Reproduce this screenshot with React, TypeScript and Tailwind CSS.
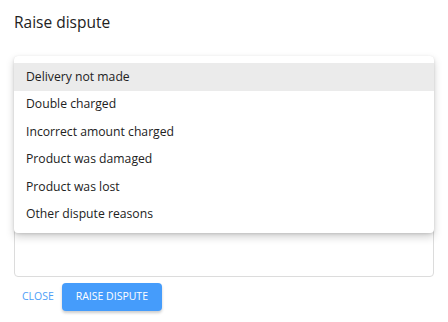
const reasons = [
  "Delivery not made",
  "Double charged",
  "Incorrect amount charged",
  "Product was damaged",
  "Product was lost",
  "Other dispute reasons",
];

export default function App() {
  return (
    <div className="w-[448px] h-[322px] bg-white px-[14px] font-['Open_Sans',sans-serif] text-[#222]">
      <h2 className="pt-[12px] text-[15.5px] leading-[20px]">Raise dispute</h2>

      {/* Text box with open reason menu over it */}
      <div className="relative mt-[24px] h-[221px] rounded-[4px] border border-[#dcdcdc]">
        <div className="absolute -left-px -right-px -top-px rounded-[4px] bg-white pb-[5px] pt-[7px] shadow-[0_4px_8px_rgba(0,0,0,0.18),0_1px_3px_rgba(0,0,0,0.12)]">
          {reasons.map((r, i) => (
            <div
              key={r}
              className={
                "flex h-[27.5px] items-center px-[12px] text-[12.2px] " +
                (i === 0 ? "bg-[#ebebeb]" : "")
              }
            >
              {r}
            </div>
          ))}
        </div>
      </div>

      <div className="mt-[6px] flex items-center">
        <button className="h-[28px] px-[8px] text-[10.5px] text-[#4d9ef7]">CLOSE</button>
        <button className="h-[28px] w-[100px] rounded-[4px] bg-[#459cfb] text-[10.5px] text-white shadow-[0_2px_3px_rgba(0,0,0,0.2)]">
          RAISE DISPUTE
        </button>
      </div>
    </div>
  );
}
